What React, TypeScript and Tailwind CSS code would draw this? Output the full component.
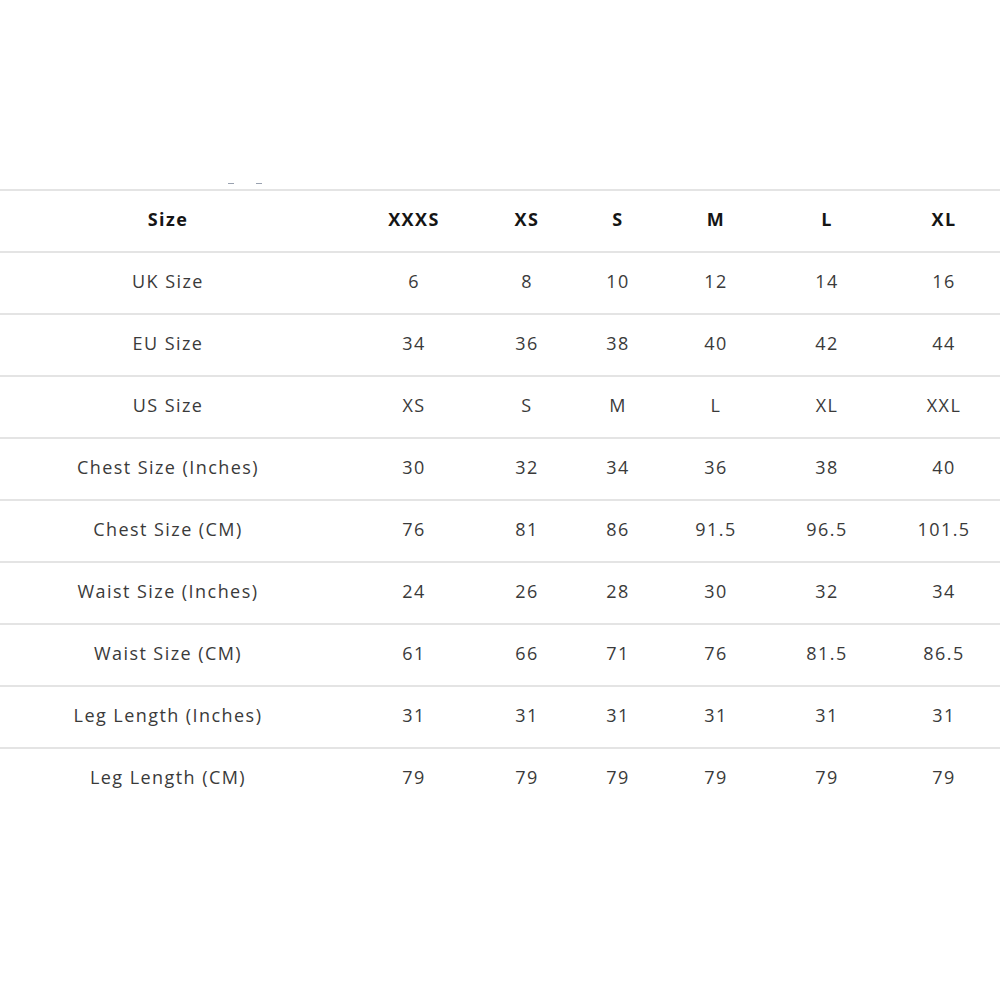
const sizes = ["XXXS", "XS", "S", "M", "L", "XL"];

const rows: [string, string[]][] = [
  ["UK Size", ["6", "8", "10", "12", "14", "16"]],
  ["EU Size", ["34", "36", "38", "40", "42", "44"]],
  ["US Size", ["XS", "S", "M", "L", "XL", "XXL"]],
  ["Chest Size (Inches)", ["30", "32", "34", "36", "38", "40"]],
  ["Chest Size (CM)", ["76", "81", "86", "91.5", "96.5", "101.5"]],
  ["Waist Size (Inches)", ["24", "26", "28", "30", "32", "34"]],
  ["Waist Size (CM)", ["61", "66", "71", "76", "81.5", "86.5"]],
  ["Leg Length (Inches)", ["31", "31", "31", "31", "31", "31"]],
  ["Leg Length (CM)", ["79", "79", "79", "79", "79", "79"]],
];

const cols = "grid grid-cols-[336px_156px_70px_112px_84px_138px_96px]";

export default function App() {
  return (
    <main className="min-h-[1000px] w-[1000px] bg-white font-['Open_Sans',sans-serif]">
      <div className="h-[189px] flex items-end pb-[5px] pl-[228px] gap-[22px]">
        <span className="block h-px w-[6px] bg-gray-400" />
        <span className="block h-px w-[6px] bg-gray-400" />
      </div>
      <div className={`${cols} h-[62px] items-center pb-[3px] border-t-2 border-[#e4e4e4] text-[18px] tracking-[0.08em] font-bold text-[#151515]`}>
        <div className="text-center">Size</div>
        {sizes.map((s) => (
          <div key={s} className="text-center">{s}</div>
        ))}
      </div>
      {rows.map(([label, vals]) => (
        <div
          key={label}
          className={`${cols} h-[62px] items-center pb-[3px] border-t-2 border-[#e4e4e4] text-[18px] tracking-[0.08em] text-[#3a3a3a]`}
        >
          <div className="text-center">{label}</div>
          {vals.map((v, i) => (
            <div key={i} className="text-center">{v}</div>
          ))}
        </div>
      ))}
    </main>
  );
}
